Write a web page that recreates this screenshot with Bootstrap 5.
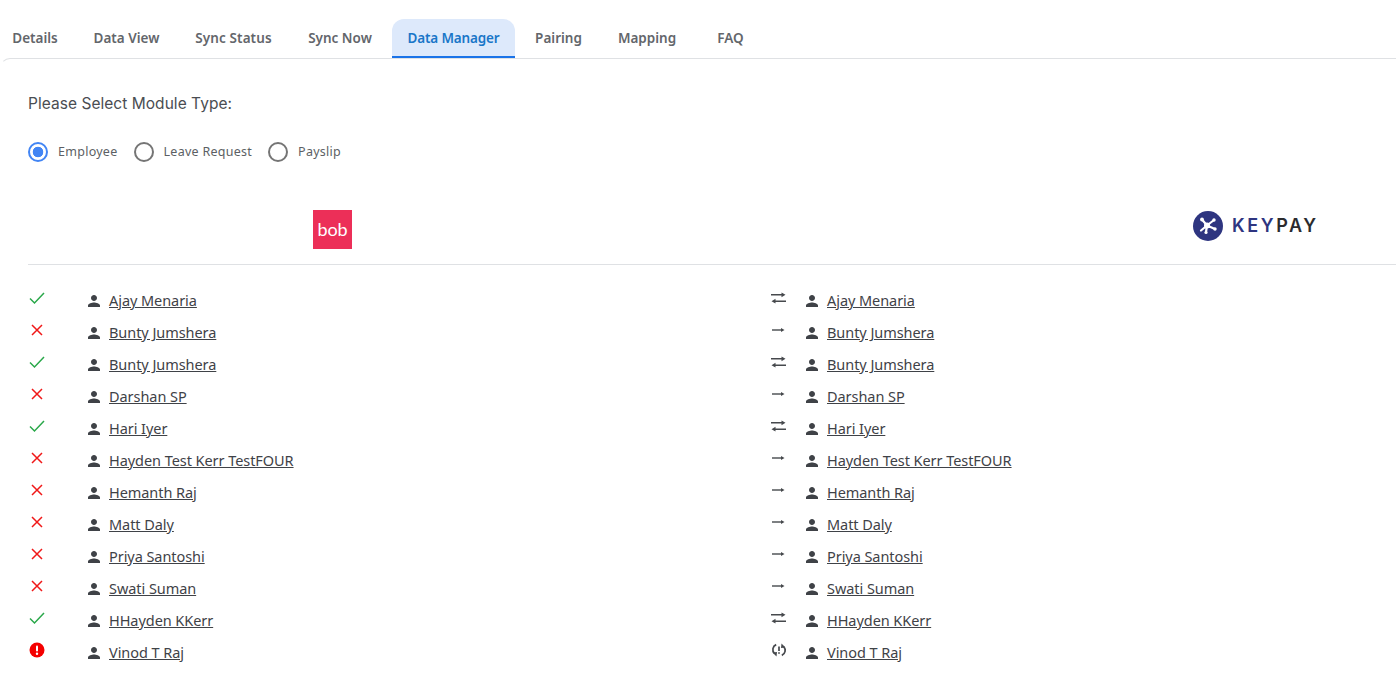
<!DOCTYPE html>
<html lang="en">
<head>
<meta charset="utf-8">
<title>Data Manager</title>
<link href="https://cdn.jsdelivr.net/npm/bootstrap@5.3.0/dist/css/bootstrap.min.css" rel="stylesheet">
<style>
html,body{height:685px;overflow:hidden;background:#fff}
body{font-family:"Noto Sans","Liberation Sans",sans-serif;color:#3f4247}
.tabbar{height:58px;padding-top:19px;margin-left:-4px;gap:4px;flex-wrap:nowrap}
.tabbar .nav-link{height:39px;padding:10px 0 0;font-size:13.5px;font-weight:600;line-height:19px;color:#63666b;border-radius:12px 12px 0 0;white-space:nowrap;text-align:center}
.tabbar .nav-item:nth-child(1) .nav-link{width:78px}
.tabbar .nav-item:nth-child(2) .nav-link{width:97px}
.tabbar .nav-item:nth-child(3) .nav-link{width:109px;letter-spacing:.1px}
.tabbar .nav-item:nth-child(4) .nav-link{width:96px}
.tabbar .nav-item:nth-child(5) .nav-link{width:123px;letter-spacing:-.15px}
.tabbar .nav-item:nth-child(6) .nav-link{width:79px}
.tabbar .nav-item:nth-child(7) .nav-link{width:90px}
.tabbar .nav-item:nth-child(8) .nav-link{width:59px;margin-left:5px}
.tabbar .nav-link.active{background:#dde9fb;color:#1976c8;border-bottom:2px solid #1a73e8}
.panel{border-top:1px solid #dfe1e4;border-left:1px solid transparent;border-top-left-radius:10px;padding:0 0 0 27px;height:627px}
.module-title{font-family:Inter,sans-serif;font-size:15.5px;line-height:22px;color:#4a4d52;padding-top:34px;margin:0;letter-spacing:.04px}
.radio-row{margin-top:25px;gap:16px;height:24px}
.radio-row .form-check{display:flex;align-items:center;gap:10px;margin:0;padding:0;min-height:0}
.radio-row .form-check-input{float:none;margin:0;width:20px;height:20px;background:#fff;border:2px solid #757575;border-radius:50%;box-shadow:none}
.radio-row .form-check-input:checked{border-color:#4285f4;background-image:radial-gradient(circle,#4285f4 0 5px,#fff 5.6px)}
.radio-row .form-check-label{font-size:12.5px;line-height:18px;color:#5c5f64;letter-spacing:.27px}
.logo-row{display:grid;grid-template-columns:743px 625px;height:55px;margin-top:46px;border-bottom:1px solid #dfe1e4}
.bob-logo{margin-left:285px;width:39px;height:39px;background:#ec2f58;color:#fff;font-family:Lato,sans-serif;font-size:18px;line-height:38px;text-align:center;letter-spacing:-.1px}
.keypay-logo{margin-left:422px;height:30px;margin-top:1px;gap:9px}
.keypay-logo span{font-family:Inter,sans-serif;font-weight:600;font-size:18px;letter-spacing:2.6px;color:#2e3580;line-height:30px}
.keypay-logo b{font-weight:600;color:#2b2b2e}
.people{margin:19px 0 0;padding:0;list-style:none}
.people li{display:grid;grid-template-columns:59px 684px 34px 1fr;height:32px;align-items:center}
.cell-name{display:flex;align-items:center;gap:6px;margin-left:-2px}
.cell-name a{font-size:14.5px;line-height:32px;color:#3f4247;letter-spacing:-.06px;white-space:nowrap}
.ico{display:block;flex:none}
.person{width:18px;height:18px;fill:#3f4247;margin-top:2px}
.st{width:16px;height:16px;margin:-5px 0 0 1px;fill:none;stroke-width:1.5}
.ok{stroke:#2aa84a}.no{stroke:#f01818}
.dir{width:16px;height:16px;margin-top:-5px;fill:#46494d;stroke:#46494d;stroke-width:1.4}
</style>
</head>
<body>
<ul class="nav tabbar">
<li class="nav-item"><a class="nav-link" href="#">Details</a></li>
<li class="nav-item"><a class="nav-link" href="#">Data View</a></li>
<li class="nav-item"><a class="nav-link" href="#">Sync Status</a></li>
<li class="nav-item"><a class="nav-link" href="#">Sync Now</a></li>
<li class="nav-item"><a class="nav-link active" href="#">Data Manager</a></li>
<li class="nav-item"><a class="nav-link" href="#">Pairing</a></li>
<li class="nav-item"><a class="nav-link" href="#">Mapping</a></li>
<li class="nav-item"><a class="nav-link" href="#">FAQ</a></li>
</ul>
<main class="panel">
<p class="module-title">Please Select Module Type:</p>
<div class="d-flex radio-row">
<div class="form-check"><input class="form-check-input" type="radio" name="mod" id="m1" checked><label class="form-check-label" for="m1">Employee</label></div>
<div class="form-check"><input class="form-check-input" type="radio" name="mod" id="m2"><label class="form-check-label" for="m2">Leave Request</label></div>
<div class="form-check"><input class="form-check-input" type="radio" name="mod" id="m3"><label class="form-check-label" for="m3">Payslip</label></div>
</div>
<div class="logo-row">
<div><div class="bob-logo">bob</div></div>
<div><div class="keypay-logo d-flex align-items-center">
<svg class="ico" width="30" height="30" viewBox="0 0 30 30"><circle cx="15" cy="15" r="15" fill="#2e3580"/><g stroke="#fff" stroke-width="2.200" stroke-linecap="round"><path d="M14 14.500 9 8.500M14 14.500 21 9M14 14.500l8 3.500M14 14.500 13 21M14 14.500l-6 5"/></g><g fill="#fff"><circle cx="14" cy="14.500" r="3"/><circle cx="9" cy="8.500" r="1.900"/><circle cx="21" cy="9" r="1.700"/><circle cx="22" cy="18" r="1.700"/><circle cx="13" cy="21.500" r="1.600"/></g></svg>
<span>KEY<b>PAY</b></span></div></div>
</div>
<ul class="people" id="people"></ul>
</main>
<svg width="0" height="0" class="position-absolute"><defs>
<symbol id="i-person" viewBox="0 0 24 24"><path d="M12 12c2.210 0 4-1.790 4-4s-1.790-4-4-4-4 1.790-4 4 1.790 4 4 4zm0 2c-2.670 0-8 1.340-8 4v2h16v-2c0-2.660-5.330-4-8-4z"/></symbol>
<symbol id="i-ok" viewBox="0 0 16 16"><path d="M1 8.500 5.500 13 15 3"/></symbol>
<symbol id="i-no" viewBox="0 0 16 16"><path d="M3 3l10 10M13 3 3 13"/></symbol>
<symbol id="i-swap" viewBox="0 0 16 16"><path d="M0 4.800h11M15 11.200H4" fill="none"/><path d="M10.500 2.400 14.500 4.800l-4 2.400zM4.500 8.800.5 11.200l4 2.400z" stroke="none"/></symbol>
<symbol id="i-right" viewBox="0 0 16 16"><path d="M1 8h9.500" fill="none"/><path d="M10 5.900 13.500 8 10 10.100z" stroke="none"/></symbol>
<symbol id="i-sync" viewBox="0 0 16 16"><g fill="none" stroke-width="1.700"><path d="M5.200 2.600A5.400 5.400 0 0 0 3.500 11.500M10.800 13.400A5.400 5.400 0 0 0 12.500 4.500M8 4.500v4.500M8 10.300v1.400"/></g><path d="M1.500 10.500l4.500-.5-.5 4.500zM14.500 5.500l-4.500.5.500-4.500z" stroke="none"/></symbol>
</defs></svg>
<script>
var rows=[["ok","swap","Ajay Menaria"],["no","right","Bunty Jumshera"],["ok","swap","Bunty Jumshera"],["no","right","Darshan SP"],["ok","swap","Hari Iyer"],["no","right","Hayden Test Kerr TestFOUR"],["no","right","Hemanth Raj"],["no","right","Matt Daly"],["no","right","Priya Santoshi"],["no","right","Swati Suman"],["ok","swap","HHayden KKerr"],["err","sync","Vinod T Raj"]];
function use(id,c){return '<svg class="ico '+c+'"><use href="#i-'+id+'"></use></svg>';}
function nm(n){return '<div class="cell-name">'+use("person","person")+'<a href="#">'+n+'</a></div>';}
document.getElementById("people").innerHTML=rows.map(function(r){
var s=r[0]=="err"?'<svg class="ico st" viewBox="0 0 16 16" stroke="none"><circle cx="8" cy="8" r="7.500" fill="#f40000"/><rect x="7" y="3.500" width="2" height="6" rx="1" fill="#fff"/><circle cx="8" cy="11.800" r="1.200" fill="#fff"/></svg>':use(r[0],"st "+r[0]);
return '<li>'+'<div>'+s+'</div>'+nm(r[2])+'<div>'+use(r[1],"dir")+'</div>'+nm(r[2])+'</li>';}).join("");
</script>
<script src="https://cdn.jsdelivr.net/npm/bootstrap@5.3.0/dist/js/bootstrap.bundle.min.js"></script>
</body>
</html>
